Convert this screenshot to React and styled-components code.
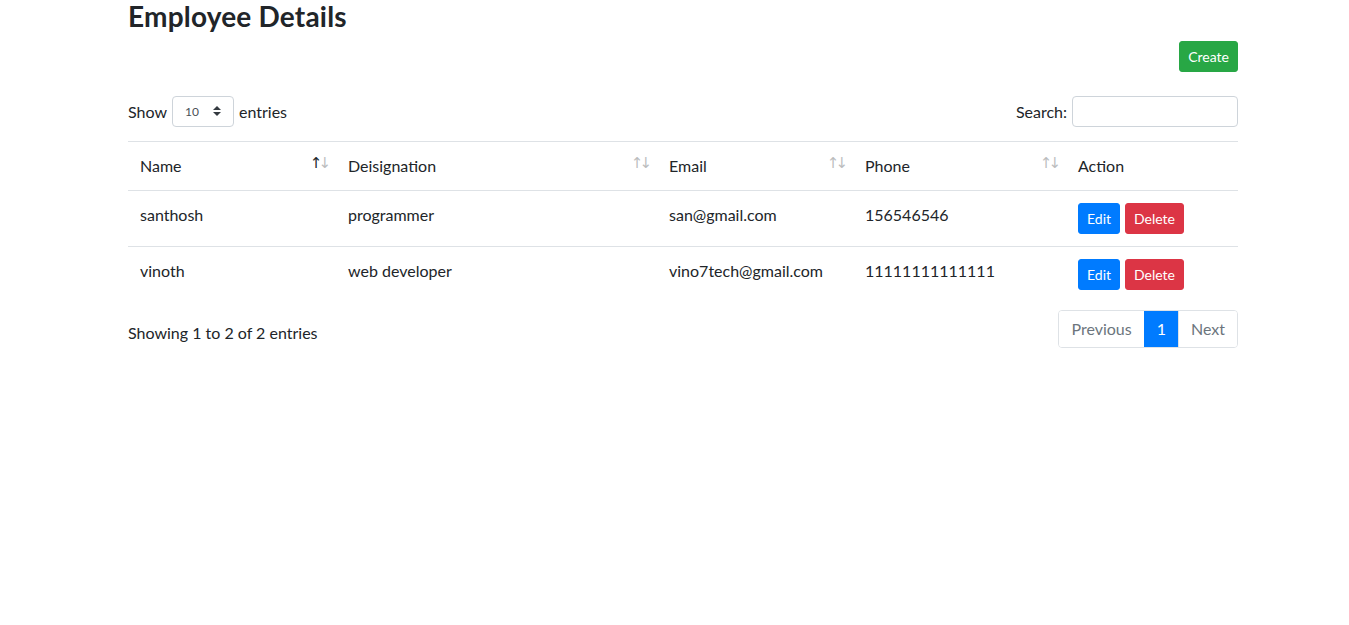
import React from 'react'
import styled, { createGlobalStyle } from 'styled-components'

const Global = createGlobalStyle`
body{
    margin: 0;
    font-family: Lato, 'Liberation Sans', sans-serif;
    font-size: 16px;
    color: #212529;
    background: #fff;
}
*{ box-sizing: border-box; }
`
const Page = styled.div`
margin-left: 128px;
width: 1110px;
`
const Title = styled.h3`
margin: 0 0 7px 0;
font-size: 28px;
font-weight: 700;
line-height: 1.2;
letter-spacing: 0.2px;
`
const TopBar = styled.div`
display: flex;
justify-content: flex-end;
`
const Button = styled.button`
font-family: inherit;
font-size: 14px;
line-height: 1.5;
padding: 4px 8px;
height: 31px;
border: 1px solid ${p => p.color};
background-color: ${p => p.color};
color: white;
border-radius: 3px;
cursor: pointer;
margin-right: ${p => p.gap || 0}px;
`
const Controls = styled.div`
margin-top: 24px;
display: flex;
justify-content: space-between;
align-items: center;
label{
    display: flex;
    align-items: center;
    gap: 5px;
    font-size: 16px;
}
`
const Select = styled.div`
width: 62px;
height: 31px;
border: 1px solid #ced4da;
border-radius: 4px;
display: flex;
align-items: center;
justify-content: space-between;
padding: 0 12px 0 12px;
font-size: 12px;
color: #495057;
`
const SearchBox = styled.input`
width: 166px;
height: 31px;
border: 1px solid #ced4da;
border-radius: 4px;
outline: none;
`
const Table = styled.table`
margin-top: 14px;
width: 100%;
border-collapse: collapse;
th, td{
    text-align: left;
    padding: 12px;
    border-top: 1px solid #dee2e6;
    font-weight: 400;
    vertical-align: top;
    line-height: 24px;
}
th{
    position: relative;
    border-bottom: 1px solid #dee2e6;
}
td{
    height: 56px;
}
`
const Sort = styled.span`
position: absolute;
right: 9px;
top: 9px;
font-size: 15px;
font-family: 'DejaVu Sans', sans-serif;
letter-spacing: -4px;
color: #212529;
span{
    opacity: 0.3;
}
.on{
    opacity: 1;
}
`
const Footer = styled.div`
margin-top: 8px;
display: flex;
justify-content: space-between;
align-items: center;
p{
    margin: 0;
    padding-top: 6px;
}
`
const Pager = styled.div`
display: flex;
border: 1px solid #dee2e6;
border-radius: 4px;
overflow: hidden;
height: 38px;
`
const PageItem = styled.div`
padding: 6px 12px;
line-height: 24px;
color: ${p => p.active ? '#fff' : '#6c757d'};
background: ${p => p.active ? '#007bff' : '#fff'};
border-left: ${p => p.first ? 'none' : '1px solid #dee2e6'};
border-color: ${p => p.active ? '#007bff' : '#dee2e6'};
`

const cols = [
    { name: 'Name', w: 208, on: true },
    { name: 'Deisignation', w: 321 },
    { name: 'Email', w: 196 },
    { name: 'Phone', w: 213 },
    { name: 'Action', w: 172, nosort: true },
]

const rows = [
    ['santhosh', 'programmer', 'san@gmail.com', '156546546'],
    ['vinoth', 'web developer', 'vino7tech@gmail.com', '11111111111111'],
]

const App = () => {
    return (
        <>
            <Global />
            <Page>
                <Title>Employee Details</Title>
                <TopBar>
                    <Button color="#28a745">Create</Button>
                </TopBar>
                <Controls>
                    <label>Show <Select><span>10</span><svg width="8" height="10" viewBox="0 0 8 10"><path d="M4 0L8 4H0z M4 10L0 6h8z" fill="#343a40" /></svg></Select> entries</label>
                    <label>Search: <SearchBox /></label>
                </Controls>
                <Table>
                    <thead>
                        <tr>
                            {cols.map(c => (
                                <th key={c.name} style={{ width: c.w }}>
                                    {c.name}
                                    {!c.nosort && <Sort><span className={c.on ? 'on' : ''}>↑</span><span>↓</span></Sort>}
                                </th>
                            ))}
                        </tr>
                    </thead>
                    <tbody>
                        {rows.map(r => (
                            <tr key={r[0]}>
                                {r.map((v, i) => <td key={i}>{v}</td>)}
                                <td>
                                    <Button color="#007bff" gap={5}>Edit</Button>
                                    <Button color="#dc3545">Delete</Button>
                                </td>
                            </tr>
                        ))}
                    </tbody>
                </Table>
                <Footer>
                    <p>Showing 1 to 2 of 2 entries</p>
                    <Pager>
                        <PageItem first>Previous</PageItem>
                        <PageItem active>1</PageItem>
                        <PageItem>Next</PageItem>
                    </Pager>
                </Footer>
            </Page>
        </>
    )
}

export default App
